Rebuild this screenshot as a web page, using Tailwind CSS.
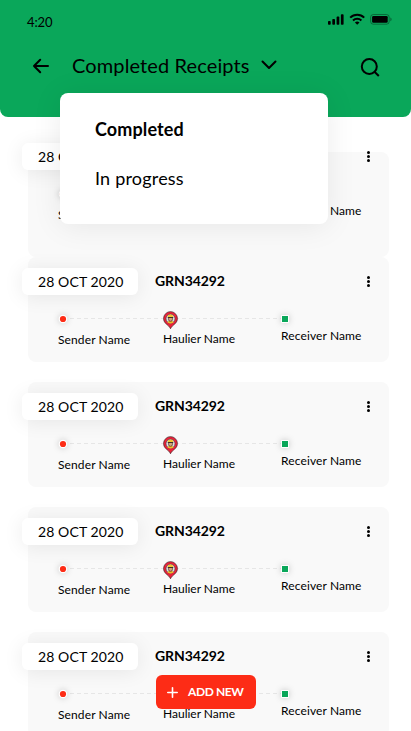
<!DOCTYPE html>
<html lang="en">
<head>
<meta charset="utf-8">
<meta name="viewport" content="width=device-width, initial-scale=1">
<title>Completed Receipts</title>
<script src="https://cdn.jsdelivr.net/npm/@tailwindcss/browser@4"></script>
</head>
<body class="bg-white font-['Lato',sans-serif] text-black">
<div class="relative flex h-[731px] w-[411px] flex-col overflow-hidden bg-white">
  <header class="flex h-[117px] shrink-0 flex-col rounded-b-[8px] bg-[#0aa75a]">
    <div class="flex h-[44px] items-start justify-between pl-[27px] pr-[18px]">
      <span class="mt-[14px] text-[13px] leading-4 tracking-[-0.1px]">4:20</span>
      <svg class="mt-[13px]" width="66" height="13" viewBox="0 0 66 13" aria-hidden="true">
        <g>
          <rect x="1" y="8" width="2.7" height="3.7" rx=".8"/><rect x="5.3" y="6" width="2.7" height="5.7" rx=".8"/><rect x="9.6" y="3.6" width="2.7" height="8.1" rx=".8"/><rect x="13.9" y="1.2" width="2.7" height="10.5" rx=".8"/>
        </g>
        <g fill="none" stroke="#000" stroke-width="2"><path d="M23.2 4.6a9.9 9.9 0 0 1 14 0"/><path d="M26 7.500a6.100 6.100 0 0 1 8.400 0"/></g>
        <path d="M30.200 11.800l-2.300-2.200a3.300 3.300 0 0 1 4.600 0z"/>
        <rect x="43.600" y="1.500" width="18.600" height="9.700" rx="2.700" fill="none" stroke="#000" stroke-opacity=".35"/>
        <rect x="45.100" y="3" width="15.600" height="6.700" rx="1.300"/>
        <path d="M63.300 4.600v3.600c.8-.3 1.300-1 1.300-1.800s-.5-1.500-1.300-1.800z" fill-opacity=".4"/>
      </svg>
    </div>
    <div class="flex h-[44px] items-center pl-[32px] pr-[30px]">
      <svg width="18" height="16" viewBox="0 0 18 16" fill="none" stroke="#000" stroke-width="2" stroke-linecap="round" stroke-linejoin="round" aria-hidden="true"><path d="M16 8H2M8.200 1.800L2 8l6.200 6.200"/></svg>
      <h1 class="-mt-[2px] ml-[22px] w-[178px] whitespace-nowrap text-[20px] leading-6 tracking-[0.12px]">Completed Receipts</h1>
      <svg class="-mt-[2px] ml-[10px]" width="18" height="12" viewBox="0 0 18 12" fill="none" stroke="#000" stroke-width="2" stroke-linecap="round" stroke-linejoin="round" aria-hidden="true"><path d="M2.500 2.500L9 9l6.500-6.500"/></svg>
      <svg class="ml-auto mt-[2px]" width="21" height="21" viewBox="0 0 21 21" fill="none" stroke="#000" stroke-width="2" aria-hidden="true"><circle cx="9.300" cy="9.500" r="7.500"/><path d="M14.500 14.800l4.300 4.200"/></svg>
    </div>
  </header>

  <main id="list" class="flex flex-col gap-[20px] pl-[28px] pr-[22px] pt-[15px]"></main>

  <div class="absolute left-[60px] top-[93px] flex h-[131px] w-[268px] flex-col gap-[25px] rounded-[8px] bg-white pl-[35px] pt-[24px] text-[18px] leading-6 shadow-[0_2px_30px_rgba(0,0,0,0.08)]">
    <span class="font-bold tracking-[0.12px]">Completed</span>
    <span class="tracking-[0.2px]">In progress</span>
  </div>

  <button class="absolute left-[156px] top-[675px] flex h-[34px] w-[100px] items-center rounded-[6px] bg-[#fd2c16] pl-[11px] text-[12px] font-bold tracking-[-0.4px] text-white">
    <svg class="mr-[10px]" width="11" height="11" viewBox="0 0 11 11" stroke="#fff" stroke-width="1.600" stroke-linecap="round" aria-hidden="true"><path d="M5.500.8v9.400M.8 5.500h9.400"/></svg>
    <span class="whitespace-nowrap">ADD NEW</span>
  </button>
</div>

<template id="receipt">
  <article class="h-[105px] shrink-0">
    <div class="flex h-[48px] items-start pt-[11px]">
      <span class="-ml-[6px] flex h-[27px] w-[116px] shrink-0 items-center whitespace-nowrap rounded-[6px] bg-white pb-[1px] pl-[16px] text-[14px] tracking-[0.1px] shadow-[0_2px_20px_rgba(0,0,0,0.08)]">28 OCT 2020</span>
      <span class="ml-[17px] text-[14px] font-bold leading-[26px] tracking-[-0.08px]">GRN34292</span>
      <svg class="ml-auto mr-[18px] mt-[7px]" width="5" height="13" viewBox="0 0 5 13" aria-hidden="true"><circle cx="2.500" cy="2.500" r="1.500"/><circle cx="2.500" cy="6.500" r="1.500"/><circle cx="2.500" cy="10.500" r="1.500"/></svg>
    </div>
    <svg class="block overflow-visible" width="361" height="26" viewBox="0 0 361 26" aria-hidden="true">
      <path d="M42 13.500H254" stroke="#e6e6e6" stroke-dasharray="4 3"/>
      <circle class="drop-shadow-[0_0_3px_rgba(0,0,0,0.2)]" cx="35" cy="14" r="4.300" fill="#fff"/><circle cx="35" cy="14" r="3.100" fill="#fd2c16"/>
      <path d="M142.500 23.700c-1-2.300-3-3.800-5-5.400a6.900 6.900 0 1 1 10 0c-2 1.600-4 3.100-5 5.400z" fill="#ee2038" stroke="#55262b" stroke-width=".8"/>
      <circle cx="142.500" cy="13.700" r="4.500" fill="#dcdde0" stroke="#45383a" stroke-width=".6"/>
      <path d="M139.500 17.600q.4-2 3-2t3 2q-3 1.800-6 0z" fill="#ecbd2b"/>
      <rect x="140.600" y="11.500" width="3.800" height="4.800" rx="1.700" fill="#d6a17c" stroke="#453427" stroke-width=".7"/>
      <path d="M139.800 12.500v-1.100q0-1.800 2.700-1.800t2.700 1.800v1.100z" fill="#f1c62f"/><path d="M139.800 12.500h5.400" stroke="#3b3027" stroke-width="1"/>
      <rect class="drop-shadow-[0_0_3px_rgba(0,0,0,0.2)]" x="253" y="10" width="8" height="8" rx="1" fill="#fff"/><rect x="254" y="11" width="6" height="6" fill="#0aa75a"/>
    </svg>
    <div class="flex items-start whitespace-nowrap pl-[30px] text-[12px] leading-4">
      <span class="w-[105px] pt-[1px] tracking-[0.12px]">Sender Name</span>
      <span class="w-[118px]">Haulier Name</span>
      <span class="-mt-[3px] tracking-[0.12px]">Receiver Name</span>
    </div>
  </article>
</template>
<script>
  const list = document.getElementById('list');
  const template = document.getElementById('receipt');
  for (let i = 0; i < 5; i++) {
    const card = document.createElement('div');
    card.className = 'shrink-0 h-[105px] rounded-[8px] bg-[#f9f9f9]';
    card.append(template.content.cloneNode(true));
    // The first card's panel starts lower than its content.
    if (i === 0) {
      card.classList.add('mt-[20px]', '-mb-[20px]');
      card.firstElementChild.classList.add('-translate-y-[20px]');
    }
    list.append(card);
  }
</script>
</body>
</html>
